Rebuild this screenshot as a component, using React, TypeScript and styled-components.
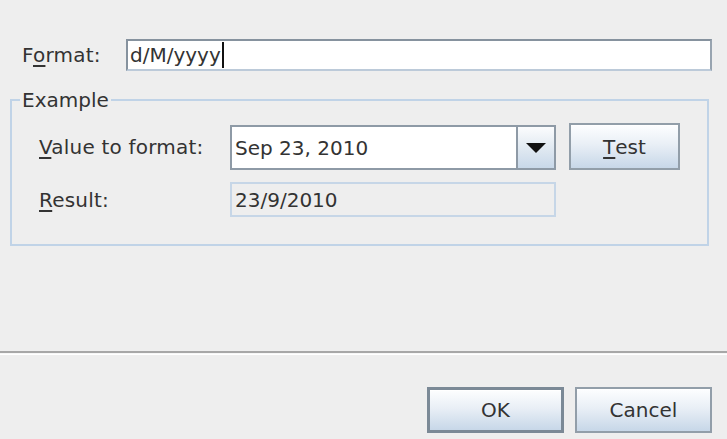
import React from "react";
import styled, { createGlobalStyle } from "styled-components";

const Global = createGlobalStyle`
  html, body { margin: 0; padding: 0; background: #eeeeee; }
  body { font-family: "DejaVu Sans", "Noto Sans", sans-serif; font-size: 20px; color: #333333; }
  * { box-sizing: border-box; }
`;

const Page = styled.div`
  width: 727px;
  height: 439px;
  display: flex;
  flex-direction: column;
  background: #eeeeee;
`;

const Main = styled.div`
  padding: 39px 15px 0 10px;
  display: flex;
  flex-direction: column;
`;

const FormatRow = styled.div`
  display: flex;
  align-items: center;
  padding-left: 12px;
`;

const Label = styled.label<{ $width?: number }>`
  width: ${(p) => (p.$width ? `${p.$width}px` : "auto")};
  flex: none;
  line-height: 24px;
  color: #333333;
  white-space: nowrap;
  align-self: center;
  letter-spacing: 0.2px;
`;

const Mn = styled.span`
  text-decoration: underline;
  text-decoration-thickness: 2px;
  text-underline-offset: 3px;
`;

const TextField = styled.div`
  flex: 1;
  height: 32px;
  background: #ffffff;
  border: 2px solid;
  border-color: #86929e #98a4b0 #bccad9 #86929e;
  display: flex;
  align-items: center;
  padding-left: 2px;
  line-height: 24px;
  color: #333333;
`;

const Caret = styled.span`
  display: inline-block;
  width: 2px;
  height: 26px;
  background: #111111;
  margin-left: 1px;
`;

const Group = styled.fieldset`
  margin: 17px 3px 0 0;
  padding: 0;
  border: 2px solid #c0d3e7;
  min-width: 0;
`;

const Legend = styled.legend`
  margin-left: 8px;
  padding: 0 2px;
  line-height: 24px;
  color: #333333;
`;

const Grid = styled.div`
  display: grid;
  grid-template-columns: 178px 326px 111px;
  column-gap: 13px;
  row-gap: 12px;
  padding: 11px 0 27px 27px;
  align-items: end;
`;

const Combo = styled.div`
  height: 45px;
  display: flex;
  border: 2px solid #8e9aa6;
  background: #ffffff;
`;

const ComboText = styled.div`
  flex: 1;
  display: flex;
  align-items: center;
  padding-left: 3px;
  line-height: 24px;
`;

const ComboArrow = styled.div`
  width: 38px;
  flex: none;
  border-left: 2px solid #8e9aa6;
  background: linear-gradient(#fbfcfd, #dfe8f1 55%, #c8d8e9);
  display: flex;
  align-items: center;
  justify-content: center;
`;

const Button = styled.button<{ $width: number; $height: number; $default?: boolean }>`
  width: ${(p) => p.$width}px;
  height: ${(p) => p.$height}px;
  border: ${(p) => (p.$default ? "3px solid #7b8996" : "2px solid #929ea9")};
  background: linear-gradient(#fdfeff, #e9eff6 45%, #c7d7e8);
  box-shadow: inset 0 1px 0 #ffffff;
  font-family: "DejaVu Sans", sans-serif;
  font-size: 20px;
  color: #333333;
  padding: 0;
  display: flex;
  align-items: center;
  justify-content: center;
`;

const ResultField = styled.div`
  height: 35px;
  border: 2px solid #c6d6e7;
  background: #eeeeee;
  display: flex;
  align-items: center;
  padding-left: 3px;
  line-height: 24px;
  color: #333333;
`;

const Spacer = styled.div`
  flex: 1;
`;

const Separator = styled.div`
  height: 4px;
  border-top: 2px solid #a7a7a7;
  border-bottom: 1px solid #ffffff;
  background: #f6f6f6;
`;

const ButtonRow = styled.div`
  display: flex;
  justify-content: flex-end;
  gap: 11px;
  padding: 32px 15px 6px 0;
`;

export default function App() {
  return (
    <>
      <Global />
      <Page>
        <Main>
          <FormatRow>
            <Label $width={104}>
              F<Mn>o</Mn>rmat:
            </Label>
            <TextField>
              d/M/yyyy
              <Caret />
            </TextField>
          </FormatRow>
          <Group>
            <Legend>Example</Legend>
            <Grid>
              <Label>
                <Mn>V</Mn>alue to format:
              </Label>
              <Combo>
                <ComboText>Sep 23, 2010</ComboText>
                <ComboArrow>
                  <svg width="20" height="10" viewBox="0 0 20 10">
                    <path d="M0 0 L20 0 L10 10 Z" fill="#111111" />
                  </svg>
                </ComboArrow>
              </Combo>
              <Button $width={111} $height={47}>
                <Mn>T</Mn>est
              </Button>
              <Label>
                <Mn>R</Mn>esult:
              </Label>
              <ResultField>23/9/2010</ResultField>
            </Grid>
          </Group>
        </Main>
        <Spacer />
        <Separator />
        <ButtonRow>
          <Button $width={137} $height={46} $default>
            OK
          </Button>
          <Button $width={137} $height={46}>
            Cancel
          </Button>
        </ButtonRow>
      </Page>
    </>
  );
}
